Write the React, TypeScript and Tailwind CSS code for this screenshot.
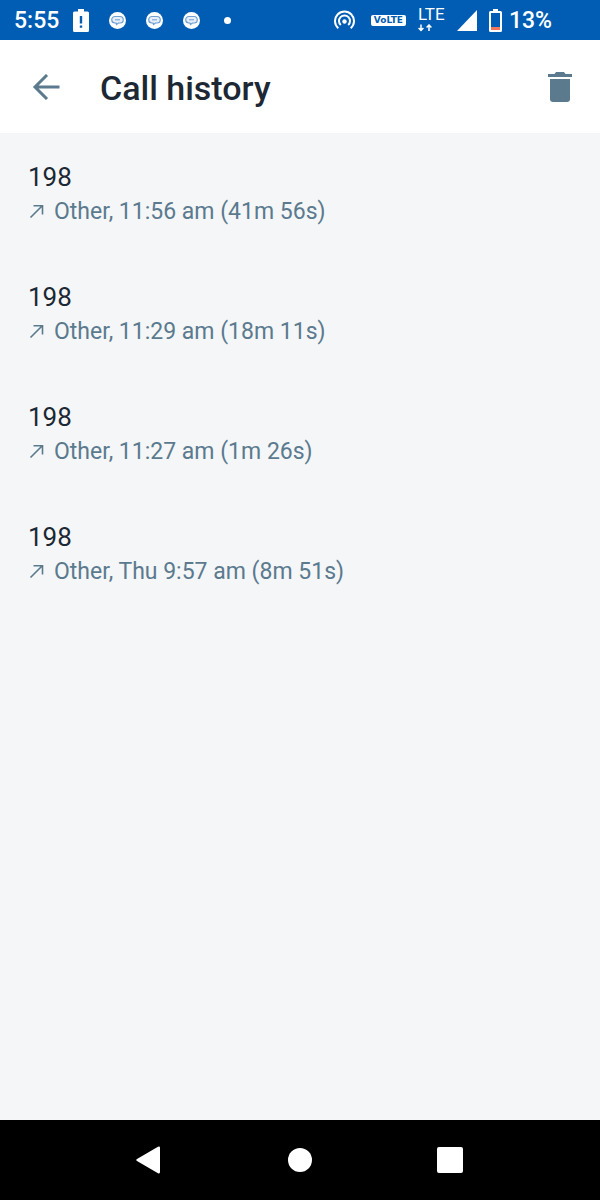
import React from "react";

interface Call {
  id: number;
  number: string;
  details: string;
}

const calls: Call[] = [
  { id: 1, number: "198", details: "Other, 11:56 am (41m 56s)" },
  { id: 2, number: "198", details: "Other, 11:29 am (18m 11s)" },
  { id: 3, number: "198", details: "Other, 11:27 am (1m 26s)" },
  { id: 4, number: "198", details: "Other, Thu 9:57 am (8m 51s)" },
];

function ChatIcon() {
  return (
    <svg className="size-[17px]" viewBox="0 0 17 17" aria-hidden="true">
      <circle cx="8.5" cy="8.5" r="8.5" fill="#fff" />
      <path
        d="M6 4.5h5a2.8 2.8 0 0 1 0 6.5H9.5L7.5 12.5 7 11H6a2.8 2.8 0 0 1 0-6.5z"
        fill="#e6effa"
        stroke="#6f9fd0"
        strokeWidth="1.2"
      />
      <path d="M6 7.8h5" stroke="#6f9fd0" strokeWidth="1" />
    </svg>
  );
}

function StatusBar() {
  return (
    <div className="flex h-10 items-center justify-between bg-[#005db3] pr-12 pl-3.5 text-white">
      <div className="flex items-center">
        <span className="w-[59px] pt-0.5 text-[23px] leading-8 font-medium">5:55</span>
        <svg className="mr-5 h-[23px] w-4" viewBox="0 0 16 23" aria-hidden="true">
          <path d="M5 0h6v2.5h3.5Q16 2.5 16 4v17.5q0 1.5-1.5 1.5h-13Q0 23 0 21.5V4q0-1.5 1.5-1.5H5z" fill="#fff" />
          <path d="M6.8 7h2.4v7.5H6.8zM6.8 16.5h2.4v2.3H6.8z" fill="#005db3" />
        </svg>
        <div className="flex items-center gap-5">
          <ChatIcon />
          <ChatIcon />
          <ChatIcon />
        </div>
        <span className="ml-6 size-[7px] rounded-full bg-white" />
      </div>

      <div className="flex items-center">
        <svg className="mr-4 h-5 w-[21px]" viewBox="0 0 21 20" fill="none" stroke="#fff" strokeWidth="2" aria-hidden="true">
          <path d="M4.3 18.2A9.5 9.5 0 1 1 16.7 18.2" />
          <path d="M6.8 15A5.5 5.5 0 1 1 14.2 15" />
          <circle cx="10.5" cy="11.5" r="2.2" fill="#fff" stroke="none" />
        </svg>
        <span className="mr-3 flex h-[11px] w-[35px] items-center justify-center rounded-xs bg-white font-['DejaVu_Sans',sans-serif] text-[9px] leading-none font-bold text-[#005db3]">
          VoLTE
        </span>
        <div className="mr-3 flex w-[27px] flex-col pb-0.5">
          <span className="text-[17px] leading-4">LTE</span>
          <svg className="mt-0.5 h-2 w-4" viewBox="0 0 16 8" fill="none" stroke="#fff" strokeWidth="1.5" aria-hidden="true">
            <path d="M3 .5v5.5M.6 4 3 6.5 5.4 4M11 7V1.5M8.6 3.5 11 1l2.4 2.5" />
          </svg>
        </div>
        <svg className="mr-3 h-[21px] w-5" viewBox="0 0 20 21" aria-hidden="true">
          <path d="M20 0v21H0z" fill="#fff" />
        </svg>
        <svg className="mr-[7px] h-[23px] w-[13px]" viewBox="0 0 13 23" aria-hidden="true">
          <path d="M4 0h5v2H4z" fill="#fff" />
          <rect x="1" y="3" width="11" height="19" rx=".5" fill="none" stroke="#fff" strokeWidth="2" />
          <path d="M2 18h9v3H2z" fill="#f4775b" />
        </svg>
        <span className="pt-0.5 text-[23px] leading-8 font-medium">13%</span>
      </div>
    </div>
  );
}

function Header() {
  return (
    <header className="flex h-[93px] items-center bg-white px-7">
      <button type="button" aria-label="Back" className="mr-9 flex w-9 justify-center">
        <svg className="h-[26px] w-7" viewBox="0 0 28 26" fill="none" stroke="#5b7a8e" strokeWidth="3" aria-hidden="true">
          <path d="M27.5 13H3M15 1 3 13l12 12" />
        </svg>
      </button>
      <h1 className="mt-0.5 flex-1 text-[34px] leading-10 font-medium text-[#1c2833]">Call history</h1>
      <button type="button" aria-label="Delete call history">
        <svg className="h-[30px] w-6" viewBox="0 0 24 30" fill="#5b7a8e" aria-hidden="true">
          <path d="M0 2h6.5L8 0h8l1.5 2H24v3H0z" />
          <path d="M2 7h20v20q0 3-3 3H5q-3 0-3-3z" />
        </svg>
      </button>
    </header>
  );
}

function CallRow({ call }: { call: Call }) {
  return (
    <li className="px-7 pt-7 pb-[22px]">
      <p className="text-[26px] leading-8 text-[#1c2833]">{call.number}</p>
      <p className="flex items-center gap-2 text-[23px] leading-[38px] text-[#5b7a8e]">
        <svg className="size-[18px]" viewBox="0 0 18 18" fill="none" stroke="currentColor" strokeWidth="1.6" aria-hidden="true">
          <path d="M2.5 14.5 14 3M5.5 2.8H14.5V11.5" />
        </svg>
        {call.details}
      </p>
    </li>
  );
}

function NavigationBar() {
  return (
    <nav className="flex h-20 items-center justify-center bg-black">
      <button type="button" aria-label="Back" className="flex w-[150px] justify-center pr-1">
        <svg className="h-7 w-6" viewBox="0 0 24 28" aria-hidden="true">
          <path d="M1 13 22 .8Q24 0 24 2v24q0 2-2 1.2L1 15q-1.5-1 0-2z" fill="#fff" />
        </svg>
      </button>
      <button type="button" aria-label="Home" className="flex w-[150px] justify-center">
        <span className="size-6 rounded-full bg-white" />
      </button>
      <button type="button" aria-label="Recent apps" className="flex w-[150px] justify-center">
        <span className="size-[26px] rounded-xs bg-white" />
      </button>
    </nav>
  );
}

export default function App() {
  return (
    <div className="flex min-h-screen flex-col bg-[#f4f6f8] font-[Roboto,sans-serif]">
      <StatusBar />
      <Header />
      <main className="flex-1">
        <ul>
          {calls.map((call) => (
            <CallRow key={call.id} call={call} />
          ))}
        </ul>
      </main>
      <NavigationBar />
    </div>
  );
}
